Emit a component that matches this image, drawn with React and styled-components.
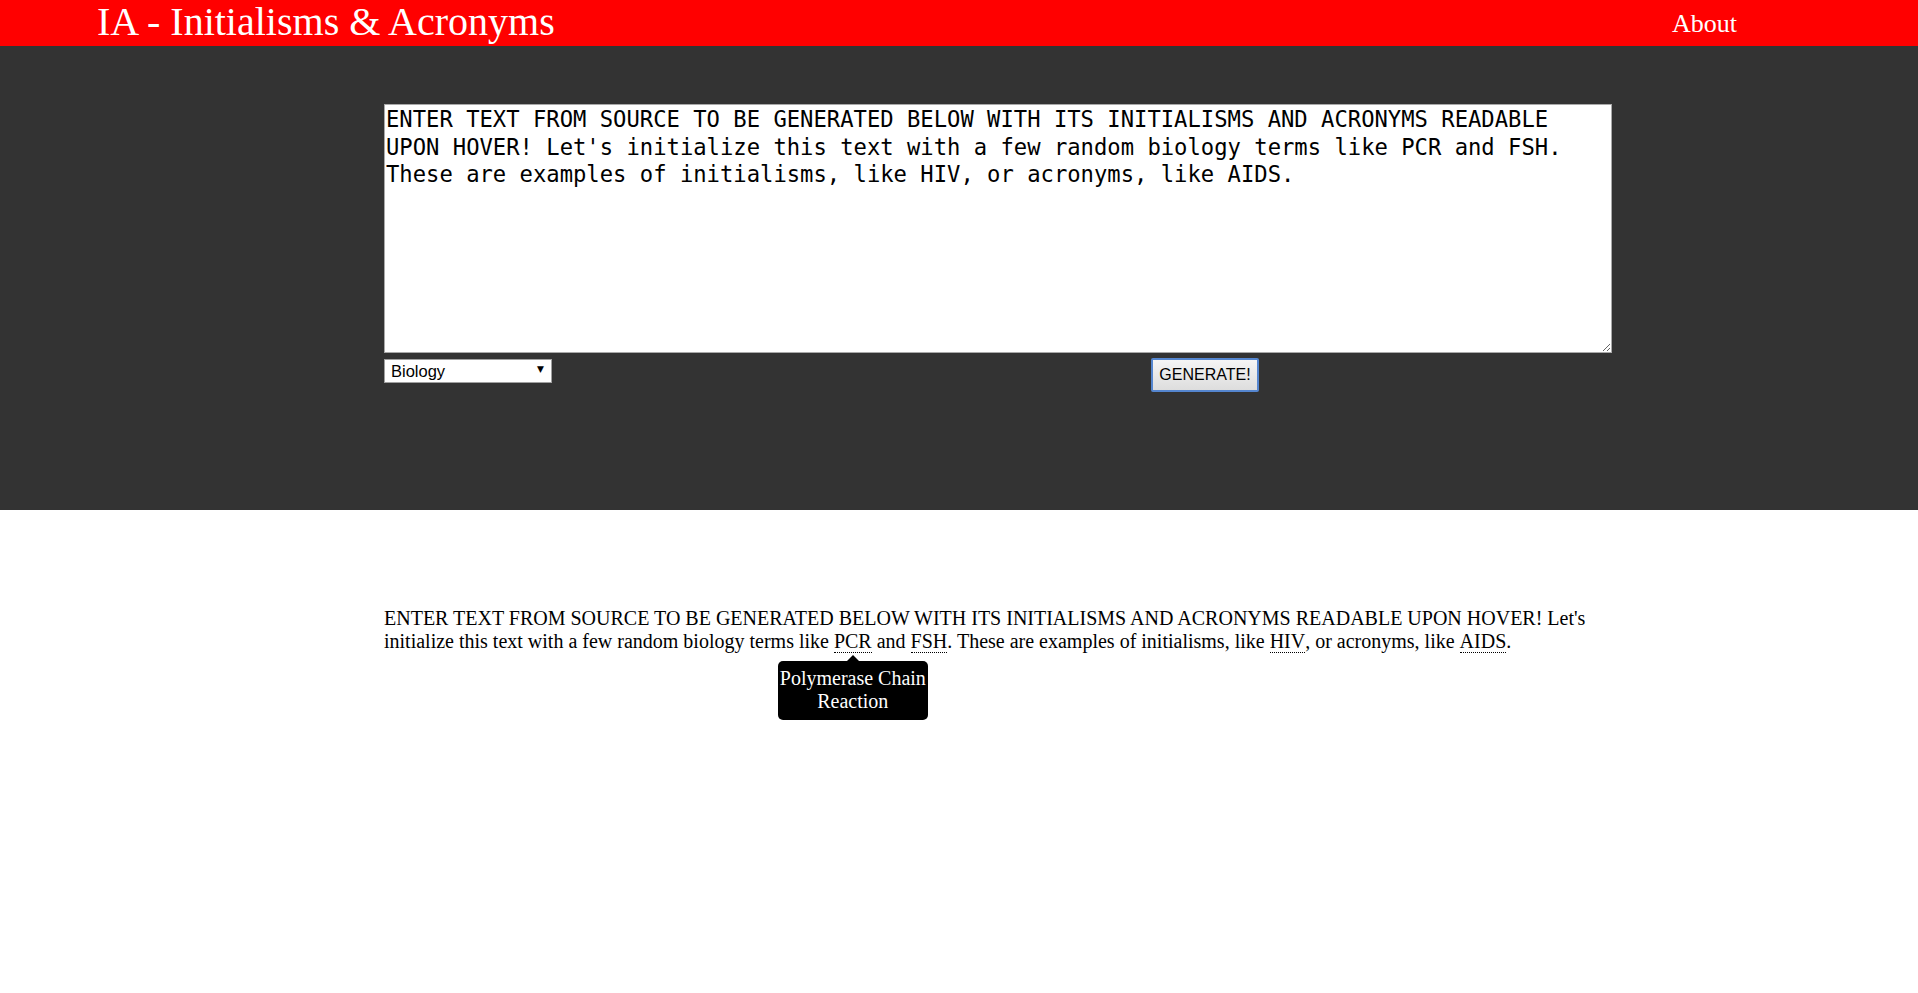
import React from 'react'
import styled, { createGlobalStyle } from 'styled-components'

const GlobalStyle = createGlobalStyle`
  body {
    margin: 0;
    background: #fff;
    font-family: "Liberation Serif", "Times New Roman", serif;
  }
`

const Header = styled.header`
  height: 46px;
  background: #ff0000;
  display: flex;
  justify-content: space-between;
  align-items: flex-start;
  padding: 0 181px 0 97px;
  color: #fff;
`

const Title = styled.h1`
  margin: 0;
  font-weight: normal;
  font-size: 40px;
  line-height: 44px;
`

const NavLink = styled.a`
  font-size: 26px;
  line-height: 47px;
  color: #fff;
  text-decoration: none;
`

const InputSection = styled.section`
  background: #333333;
  height: 464px;
  box-sizing: border-box;
  padding: 58px 0 0 384px;
`

const Box = styled.div`
  width: 1228px;
`

const TextInput = styled.textarea`
  display: block;
  width: 100%;
  height: 249px;
  box-sizing: border-box;
  margin: 0;
  padding: 1px 1px;
  border: 1px solid #a9a9a9;
  font-family: "DejaVu Sans Mono", "Liberation Mono", monospace;
  font-size: 22.2px;
  line-height: 27.5px;
  color: #000;
  background: #fff;
  outline: none;
`

const Controls = styled.div`
  display: flex;
  align-items: flex-start;
  margin-top: 5px;
`

const SelectWrap = styled.div`
  position: relative;
  margin-top: 1px;
`

const Select = styled.select`
  appearance: none;
  width: 168px;
  height: 24px;
  box-sizing: border-box;
  border: 1px solid #a0a0a0;
  border-radius: 0;
  background: #fff;
  padding: 0 0 0 6px;
  font-family: "Liberation Sans", Arial, sans-serif;
  font-size: 16.5px;
  color: #000;
  outline: none;
`

const Caret = styled.span`
  position: absolute;
  right: 8px;
  top: 5px;
  font-family: "DejaVu Sans", sans-serif;
  font-size: 9px;
  color: #000;
  pointer-events: none;
`

const GenerateButton = styled.button`
  margin-left: 599px;
  width: 108px;
  height: 34px;
  box-sizing: border-box;
  border: 2px solid #5586cf;
  border-radius: 2px;
  background: linear-gradient(#f5f5f5, #dddddd);
  font-family: "Liberation Sans", Arial, sans-serif;
  font-size: 16px;
  color: #000;
  padding: 0;
`

const Output = styled.section`
  position: relative;
  padding: 97px 0 0 384px;
  min-height: 300px;
  background: #fff;
`

const Paragraph = styled.p`
  margin: 0;
  width: 1228px;
  font-size: 20px;
  line-height: 23px;
  color: #000;
`

const Abbr = styled.span`
  position: relative;
  display: inline-block;
  line-height: 22px;
  border-bottom: 1px dotted #000;
`

const Tooltip = styled.div`
  position: absolute;
  z-index: 5;
  top: 31px;
  left: 50%;
  margin-left: -75px;
  width: 150px;
  box-sizing: border-box;
  padding: 6px 0 7px;
  background-color: #000;
  color: #fff;
  border-radius: 5px;
  text-align: center;
  font-size: 20px;
  line-height: 23px;
`

const Arrow = styled.i`
  position: absolute;
  top: -6px;
  left: 69px;
  width: 0;
  height: 0;
  border-left: 6px solid transparent;
  border-right: 6px solid transparent;
  border-bottom: 6px solid #000;
`

const Term = ({ children, tip }) => (
  <Abbr>
    {children}
    {tip ? (
      <Tooltip>
        <Arrow />
        {tip}
      </Tooltip>
    ) : null}
  </Abbr>
)

const sample =
  "ENTER TEXT FROM SOURCE TO BE GENERATED BELOW WITH ITS INITIALISMS AND ACRONYMS READABLE UPON HOVER! Let's initialize this text with a few random biology terms like PCR and FSH. These are examples of initialisms, like HIV, or acronyms, like AIDS."

export default function App() {
  return (
    <>
      <GlobalStyle />
      <Header>
        <Title>IA - Initialisms &amp; Acronyms</Title>
        <NavLink href="#">About</NavLink>
      </Header>
      <InputSection>
        <Box>
          <TextInput defaultValue={sample} spellCheck={false} />
          <Controls>
            <SelectWrap>
              <Select defaultValue="biology">
                <option value="biology">Biology</option>
              </Select>
              <Caret>▼</Caret>
            </SelectWrap>
            <GenerateButton>GENERATE!</GenerateButton>
          </Controls>
        </Box>
      </InputSection>
      <Output>
        <Paragraph>
          ENTER TEXT FROM SOURCE TO BE GENERATED BELOW WITH ITS INITIALISMS AND ACRONYMS READABLE
          UPON HOVER! Let's initialize this text with a few random biology terms like{' '}
          <Term tip="Polymerase Chain Reaction">PCR</Term> and <Term>FSH</Term>. These are examples
          of initialisms, like <Term>HIV</Term>, or acronyms, like <Term>AIDS</Term>.
        </Paragraph>
      </Output>
    </>
  )
}
